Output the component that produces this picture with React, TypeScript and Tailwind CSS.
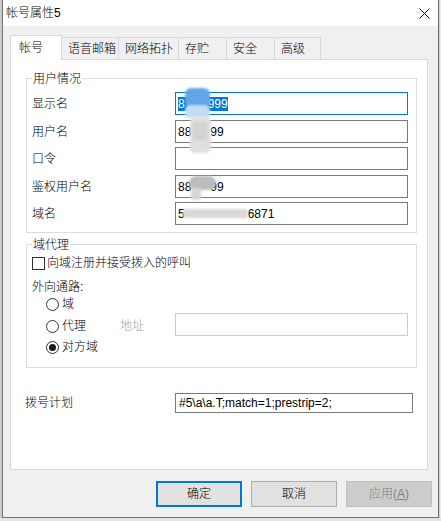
import React from "react";

function Input({
  className = "",
  children,
}: {
  className?: string;
  children?: React.ReactNode;
}) {
  return (
    <div
      className={
        "flex items-center bg-white pl-[2px] whitespace-nowrap overflow-hidden " +
        className
      }
    >
      {children}
    </div>
  );
}

function Radio({ checked = false }: { checked?: boolean }) {
  return (
    <div className="w-[13px] h-[13px] rounded-full border border-[#333333] bg-white flex items-center justify-center shrink-0">
      {checked && <div className="w-[7px] h-[7px] rounded-full bg-[#1a1a1a]" />}
    </div>
  );
}

export default function App() {
  const tabs = [
    { t: "语音邮箱", w: "w-[57px]" },
    { t: "网络拓扑", w: "w-[60px]" },
    { t: "存贮", w: "w-[48px]" },
    { t: "安全", w: "w-[48px]" },
    { t: "高级", w: "w-[46px]" },
  ];
  return (
    <div className="relative w-[441px] h-[521px] overflow-hidden bg-[#e4e4e4] text-[12px] leading-[16px] text-black font-light font-['Liberation_Sans','Noto_Sans_CJK_SC',sans-serif]">
      <div className="flex h-[518px]">
        <div className="w-[2px] bg-[#cbcbcb]" />
        <div className="w-[437px] h-[518px] flex flex-col border-l border-r border-b border-[#707070] bg-[#f0f0f0]">
          {/* title bar */}
          <div className="h-[26px] bg-white flex items-center justify-between pl-[3px]">
            <span>帐号属性5</span>
            <div className="w-[28px] h-[26px] flex items-center justify-center">
              <svg width="11" height="11" viewBox="0 0 11 11">
                <path d="M0.5 0.5 L10.5 10.5 M10.5 0.5 L0.5 10.5" stroke="#111" strokeWidth="1" fill="none" />
              </svg>
            </div>
          </div>
          {/* body */}
          <div className="flex-1 flex flex-col pt-[9px] pl-[7px]">
            {/* tabs */}
            <div className="flex items-end h-[24px]">
              <div className="relative z-10 w-[52px] h-[25px] mb-[-1px] bg-white border-l border-t border-r border-[#d9d9d9] flex items-center pl-[8px] pb-[1px]">
                帐号
              </div>
              {tabs.map((tb) => (
                <div
                  key={tb.t}
                  className={
                    "h-[22px] bg-[#f0f0f0] border-t border-r border-[#d9d9d9] flex items-center pl-[6px] pt-[1px] " +
                    tb.w
                  }
                >
                  {tb.t}
                </div>
              ))}
            </div>
            {/* panel */}
            <div className="w-[418px] h-[411px] border border-[#d9d9d9] bg-white flex flex-col">
              <fieldset className="mt-[10px] ml-[15px] w-[391px] border border-[#dcdcdc] pb-[7px]">
                <legend className="ml-[5px] px-[1px] leading-[16px]">
                  <span className="relative top-[1px]">用户情况</span>
                </legend>
                <div className="flex items-center mt-[6px] h-[23px]">
                  <div className="w-[148px] pl-[5px]">显示名</div>
                  <Input className="w-[233px] h-[23px] border border-[#0078d7]">
                    <span className="bg-[#0078d7] text-white flex h-[14px] items-center">
                      <span>8</span>
                      <span className="inline-block w-[23px]" />
                      <span>999</span>
                    </span>
                  </Input>
                </div>
                <div className="flex items-center mt-[5px] h-[23px]">
                  <div className="w-[148px] pl-[5px]">用户名</div>
                  <Input className="w-[233px] h-[23px] border border-[#7a7a7a]">
                    <span>88</span>
                    <span className="inline-block w-[19px]" />
                    <span>99</span>
                  </Input>
                </div>
                <div className="flex items-center mt-[4px] h-[23px]">
                  <div className="w-[148px] pl-[5px]">口令</div>
                  <Input className="w-[233px] h-[23px] border border-[#7a7a7a]" />
                </div>
                <div className="flex items-center mt-[5px] h-[23px]">
                  <div className="w-[148px] pl-[5px]">鉴权用户名</div>
                  <Input className="w-[233px] h-[23px] border border-[#7a7a7a]">
                    <span>88</span>
                    <span className="inline-block w-[19px]" />
                    <span>99</span>
                  </Input>
                </div>
                <div className="flex items-center mt-[4px] h-[23px]">
                  <div className="w-[148px] pl-[5px]">域名</div>
                  <Input className="w-[233px] h-[23px] border border-[#7a7a7a]">
                    <span>5</span>
                    <span className="inline-block w-[63px]" />
                    <span>6871</span>
                  </Input>
                </div>
              </fieldset>

              <fieldset className="mt-[3px] ml-[15px] w-[391px] border border-[#dcdcdc] pb-[12px]">
                <legend className="ml-[5px] px-[1px] leading-[16px]">
                  <span className="relative top-[1px]">域代理</span>
                </legend>
                <div className="flex items-center h-[16px] mt-[3px] pl-[5px] gap-[2px]">
                  <div className="w-[13px] h-[13px] border border-[#333333] bg-white" />
                  <span>向域注册并接受拨入的呼叫</span>
                </div>
                <div className="h-[16px] mt-[8px] pl-[5px] flex items-center">外向通路:</div>
                <div className="flex items-center h-[16px] mt-[1px] pl-[19px] gap-[3px]">
                  <Radio />
                  <span>域</span>
                </div>
                <div className="flex items-center h-[23px] mt-[1px] pl-[19px]">
                  <div className="w-[74px] flex items-center gap-[3px] pt-[3px]">
                    <Radio />
                    <span>代理</span>
                  </div>
                  <div className="w-[55px] text-[#a0a0a0] pt-[3px]">地址</div>
                  <Input className="w-[233px] h-[23px] border border-[#cccccc]" />
                </div>
                <div className="flex items-center h-[16px] mt-[3px] pl-[19px] gap-[3px]">
                  <Radio checked />
                  <span>对方域</span>
                </div>
              </fieldset>

              <div className="flex items-center mt-[25px] h-[20px] pl-[14px]">
                <div className="w-[150px]">拨号计划</div>
                <Input className="w-[238px] h-[20px] border border-[#7a7a7a] pl-[3px]">
                  <span>#5\a\a.T;match=1;prestrip=2;</span>
                </Input>
              </div>
            </div>
            {/* buttons */}
            <div className="flex justify-end gap-[9px] mt-[11px] pr-[6px]">
              <div className="w-[86px] h-[26px] border-2 border-[#0078d7] bg-[#e1e1e1] flex items-center justify-center">
                确定
              </div>
              <div className="w-[86px] h-[26px] border border-[#adadad] bg-[#e1e1e1] flex items-center justify-center">
                取消
              </div>
              <div className="w-[86px] h-[26px] border border-[#bfbfbf] bg-[#cccccc] text-[#838383] flex items-center justify-center">
                应用(<span className="underline">A</span>)
              </div>
            </div>
          </div>
        </div>
        <div className="flex-1 bg-[#ececec] border-l border-[#d0d0d0]" />
      </div>

      {/* privacy blur overlays */}
      <div className="absolute left-[185px] top-[88px] w-[25px] h-[20px] rounded-[6px] bg-[#60a6e6] blur-[1px] pointer-events-none" />
      <div className="absolute left-[185px] top-[105px] w-[25px] h-[13px] rounded-[5px] bg-[#c3dcf3] blur-[1px] pointer-events-none" />
      <div className="absolute left-[190px] top-[117px] w-[21px] h-[36px] rounded-[5px] bg-[#dfdfdf] blur-[1px] pointer-events-none" />
      <div className="absolute left-[193px] top-[122px] w-[14px] h-[18px] rounded-[4px] bg-[#d2d2d2] blur-[1px] pointer-events-none" />
      <div className="absolute left-[189px] top-[176px] w-[27px] h-[14px] rounded-full bg-[#bdbdbd] blur-[1px] pointer-events-none" />
      <div className="absolute left-[191px] top-[188px] w-[10px] h-[12px] rounded-[3px] bg-[#d6d6d6] blur-[1px] pointer-events-none" />
      <div className="absolute left-[183px] top-[209px] w-[65px] h-[9px] rounded-[3px] bg-[#d9d9d9] blur-[1px] pointer-events-none" />
    </div>
  );
}
